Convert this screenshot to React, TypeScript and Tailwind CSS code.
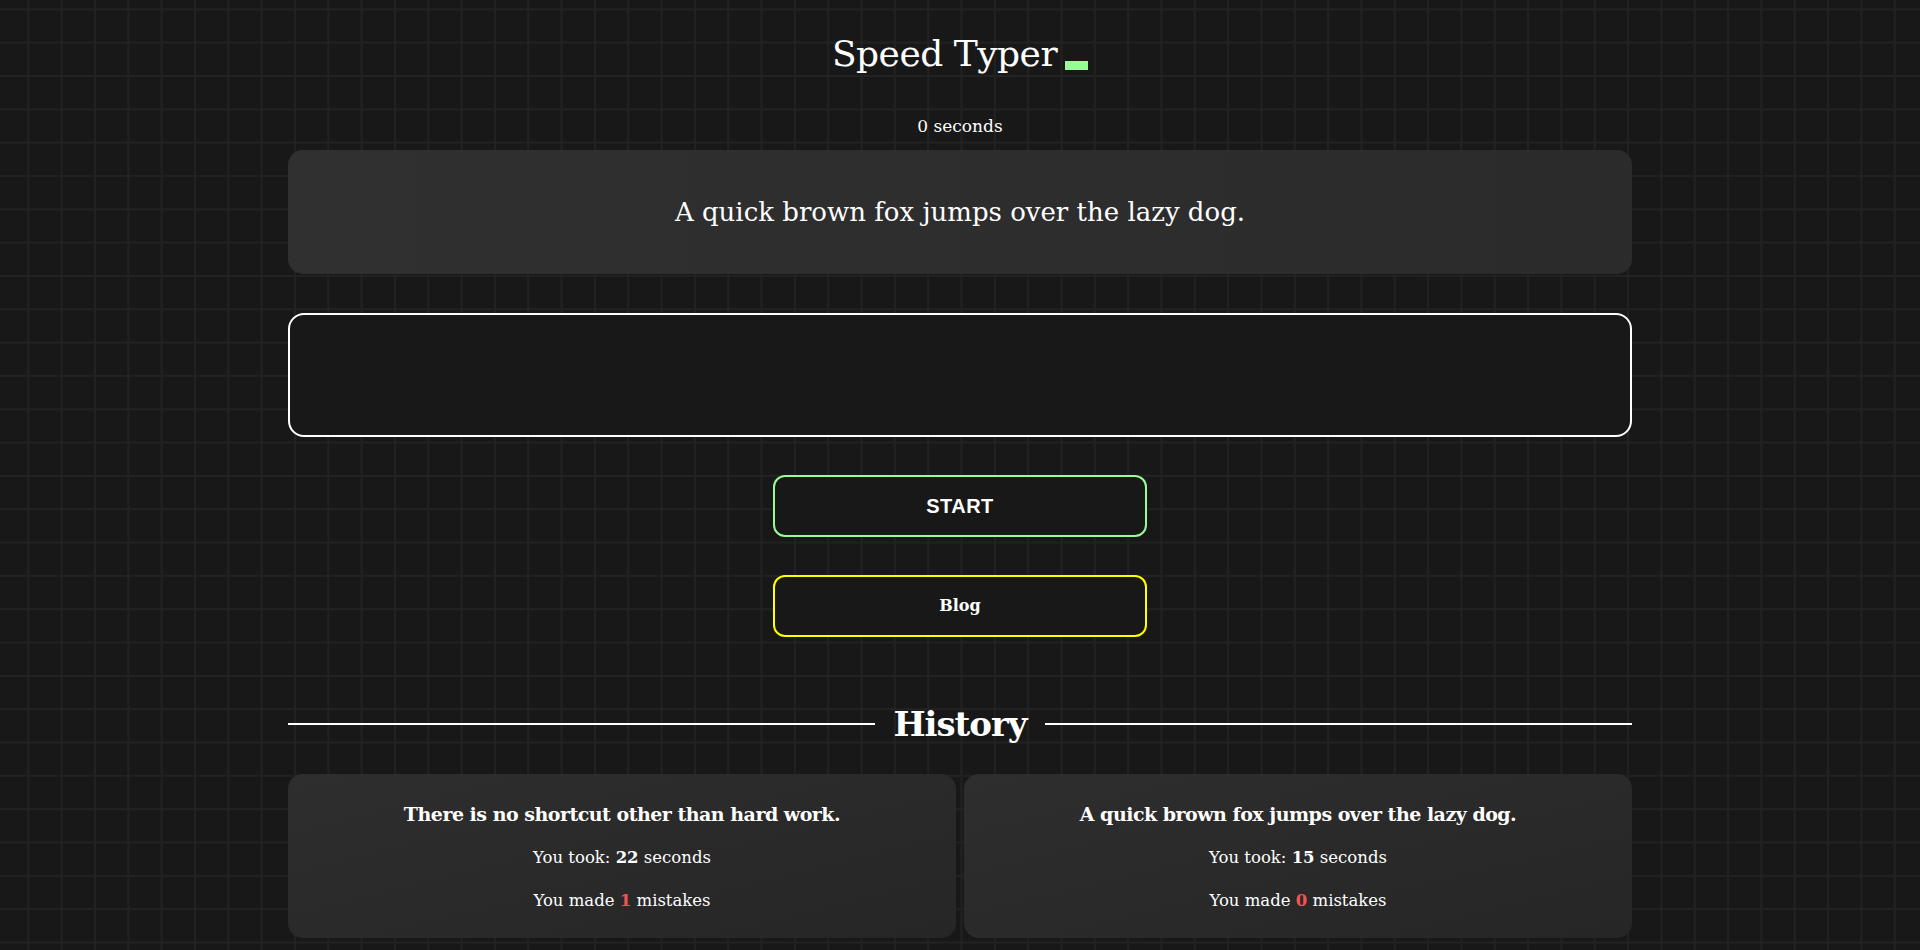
export default function App() {
  const history = [
    { text: "There is no shortcut other than hard work.", time: 22, mistakes: 1 },
    { text: "A quick brown fox jumps over the lazy dog.", time: 15, mistakes: 0 },
  ];

  return (
    <div
      className="min-h-screen w-full bg-[#181818] bg-[linear-gradient(to_right,#222222_2px,transparent_2px),linear-gradient(to_bottom,#222222_2px,transparent_2px)] bg-[size:33.33px_33.33px] bg-[position:-6px_-25px] text-white pb-3"
      style={{ fontFamily: '"DejaVu Serif", serif' }}
    >
      <div className="mx-auto w-[70%] flex flex-col items-center">
        {/* Title */}
        <h1 className="mt-[24px] h-[48px] flex items-end text-[36px] font-light leading-none tracking-[-0.5px]">
          <span>Speed Typer</span>
          <span className="ml-[8px] mb-[2px] inline-block w-[23px] h-[9px] bg-[#98fb98]" />
        </h1>

        <p className="mt-[46px] text-[17px] leading-none">0 seconds</p>

        {/* Quote */}
        <div className="mt-[15px] w-full h-[124px] rounded-[15px] bg-gradient-to-r from-[#303030] to-[#2b2b2b] flex items-center justify-center">
          <span className="text-[26px]">A quick brown fox jumps over the lazy dog.</span>
        </div>

        {/* Input */}
        <div className="mt-[39px] w-full h-[124px] rounded-[16px] border-2 border-white bg-[#181818]" />

        {/* Buttons */}
        <button className="mt-[38px] w-[374px] h-[62px] rounded-[12px] border-2 border-[#98fb98] bg-[#181818] text-[20px] font-bold tracking-wide" style={{ fontFamily: '"Liberation Sans", Arial, sans-serif' }}>
          START
        </button>
        <button className="mt-[38px] w-[374px] h-[62px] rounded-[12px] border-2 border-[#ffff00] bg-[#181818] text-[16px] font-bold">
          Blog
        </button>

        {/* History */}
        <div className="mt-[70px] w-full flex items-center gap-[18px]">
          <div className="flex-1 h-[2px] bg-white" />
          <h2 className="text-[34px] font-bold leading-none tracking-[-1px]">History</h2>
          <div className="flex-1 h-[2px] bg-white" />
        </div>

        <div className="mt-[33px] w-full grid grid-cols-2 gap-2">
          {history.map((h) => (
            <div
              key={h.text}
              className="h-[164px] rounded-[15px] bg-gradient-to-br from-[#2e2e2e] to-[#262626] flex flex-col items-center pt-[31px]"
            >
              <div className="text-[19px] font-bold leading-none tracking-[-0.5px]">{h.text}</div>
              <div className="mt-[26px] text-[16.5px] leading-none">
                You took: <b>{h.time}</b> seconds
              </div>
              <div className="mt-[26px] text-[16.5px] leading-none">
                You made <b className="text-[#f05454]">{h.mistakes}</b> mistakes
              </div>
            </div>
          ))}
        </div>
      </div>
    </div>
  );
}
